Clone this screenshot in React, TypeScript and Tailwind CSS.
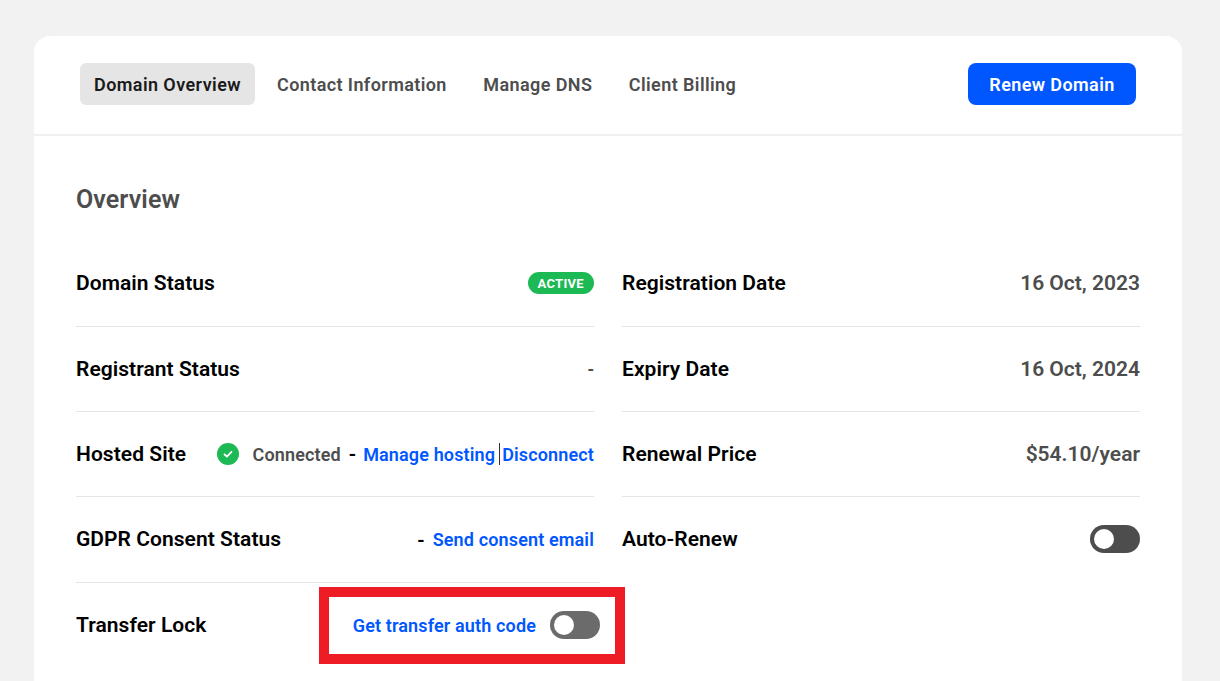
import React from 'react';

const tabs = ['Contact Information', 'Manage DNS', 'Client Billing'];

function Toggle({ color }: { color: string }) {
  return (
    <div className={`flex h-[28px] w-[50px] items-center rounded-full px-[4px] ${color}`}>
      <div className="h-[20px] w-[20px] rounded-full bg-white" />
    </div>
  );
}

function Label({ children, first }: { children: React.ReactNode; first?: boolean }) {
  return <span className={`text-[21px] font-semibold tracking-[0.05px] text-black ${first ? '' : 'mt-[2px]'}`}>{children}</span>;
}

function Row({ label, first, children }: { label: string; first?: boolean; children: React.ReactNode }) {
  return (
    <div className="flex h-[85px] items-center justify-between border-b border-[#e5e5e5]">
      <Label first={first}>{label}</Label>
      {children}
    </div>
  );
}

function Value({ children, first }: { children: React.ReactNode; first?: boolean }) {
  return <span className={`text-[21px] font-semibold text-[#4d4d4d] ${first ? '' : 'mt-[2px]'}`}>{children}</span>;
}

const linkClass = 'text-[18px] font-semibold tracking-[0.14px] text-[#0057ff]';

export default function App() {
  return (
    <div
      className="h-[681px] overflow-hidden bg-[#f2f2f2] pt-[36px] pl-[34px] pr-[38px]"
      style={{ fontFamily: 'Roboto, sans-serif' }}
    >
      <div className="h-[700px] rounded-t-[16px] bg-white">
        {/* Tabs */}
        <div className="flex h-[100px] items-center justify-between border-b-2 border-[#f0f0f0] px-[46px] pb-[3px]">
          <div className="flex items-center gap-[4.5px]">
            <div className="mr-[1.5px] flex h-[42px] w-[175px] items-center rounded-[6px] bg-[#e5e5e5] pl-[14px] pt-[2px] text-[18px] font-semibold tracking-[0.42px] whitespace-nowrap text-[#1a1a1a]">
              Domain Overview
            </div>
            {tabs.map((t) => (
              <div key={t} className="flex h-[42px] items-center px-[16px] pt-[2px] text-[18px] font-semibold tracking-[0.4px] text-[#4d4d4d]">
                {t}
              </div>
            ))}
          </div>
          <button className="flex h-[42px] w-[168px] items-center justify-center rounded-[8px] bg-[#0057ff] pt-[2px] text-[18px] font-semibold tracking-[0.4px] text-white">
            Renew Domain
          </button>
        </div>

        <div className="px-[42px]">
          <h2 className="pt-[48px] pb-[26px] text-[25px] leading-[32px] font-semibold tracking-[0.1px] text-[#4d4d4d]">Overview</h2>
          <div className="grid grid-cols-2 gap-x-[28px]">
            <div>
              <Row label="Domain Status" first>
                <span className="mb-[2px] rounded-full bg-[#1db954] px-[10px] pt-[4px] pb-[2px] text-[13px] leading-[16px] font-bold tracking-[0.3px] text-white">ACTIVE</span>
              </Row>
              <Row label="Registrant Status">
                <span className="text-[18px] font-semibold text-[#4d4d4d]">-</span>
              </Row>
              <Row label="Hosted Site">
                <div className="flex items-center">
                  <svg width="22" height="22" viewBox="0 0 22 22" className="mr-[14px]">
                    <circle cx="11" cy="11" r="11" fill="#1db954" />
                    <path d="M7.5 11.3l2.4 2.3L14.5 8.8" fill="none" stroke="#fff" strokeWidth="1.8" strokeLinecap="round" strokeLinejoin="round" />
                  </svg>
                  <span className="text-[18px] font-semibold tracking-[0.14px] text-[#4d4d4d]">Connected</span>
                  <span className="mr-[7px] ml-[8px] text-[20px] font-semibold text-black">-</span>
                  <a className={linkClass}>Manage hosting</a>
                  <span className="mr-[2px] ml-[4px] h-[22px] w-px bg-[#333]" />
                  <a className={linkClass}>Disconnect</a>
                </div>
              </Row>
              <div className="flex h-[85px] items-center justify-between pb-[2px]">
                <Label>GDPR Consent Status</Label>
                <div className="mt-[2px] flex items-center">
                  <span className="mr-[8px] text-[20px] font-semibold text-black">-</span>
                  <a className={linkClass}>Send consent email</a>
                </div>
              </div>
              {/* Transfer lock row runs a little wider than the others */}
              <div className="relative flex h-[86px] w-[524px] items-center justify-between border-t border-[#e5e5e5] pb-[2px]">
                <Label>Transfer Lock</Label>
                <div className="flex items-center gap-[14px]">
                  <a className={`${linkClass} mt-[2px]`}>Get transfer auth code</a>
                  <Toggle color="bg-[#6b6b6b]" />
                </div>
                <div className="absolute top-[4px] left-[243px] h-[77px] w-[306px] border-[10px] border-[#ee1c25]" />
              </div>
            </div>
            <div>
              <Row label="Registration Date" first><Value first>16 Oct, 2023</Value></Row>
              <Row label="Expiry Date"><Value>16 Oct, 2024</Value></Row>
              <Row label="Renewal Price"><Value>$54.10/year</Value></Row>
              <div className="flex h-[85px] items-center justify-between pb-[2px]">
                <Label>Auto-Renew</Label>
                <Toggle color="bg-[#4d4d4d]" />
              </div>
            </div>
          </div>
        </div>
      </div>
    </div>
  );
}
